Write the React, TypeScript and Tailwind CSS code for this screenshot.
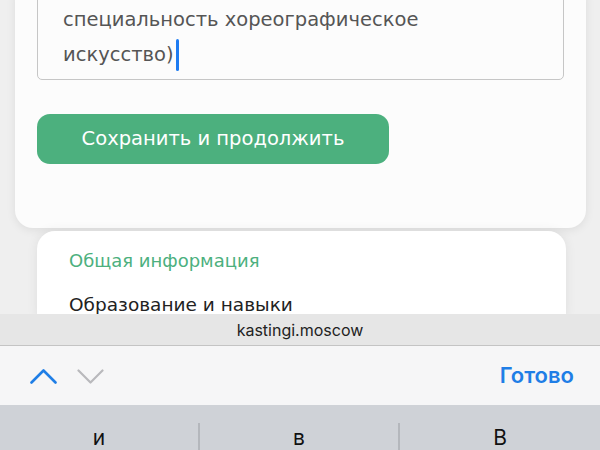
export default function App() {
    return (
        <div className="w-[600px] h-[450px] overflow-hidden bg-[#efefef] flex flex-col font-['DejaVu_Sans',sans-serif]">
            <div className="h-[314px] shrink-0 overflow-hidden flex flex-col">
                <div className="-mt-[9px] ml-[15px] w-[571px] bg-[#fcfcfc] rounded-b-[18px] shadow-[0_2px_10px_rgba(0,0,0,0.08)] pb-[64px]">
                    <div className="ml-[22px] w-[527px] border border-[#c6c6c6] rounded-[5px] pt-[10px] pb-[7px] pl-[25px] text-[19.5px] leading-[35px] text-[#555]">
                        <div>специальность хореографическое</div>
                        <div className="flex items-center">
                            искусство)
                            <span className="inline-block ml-[2px] w-[3px] h-[32px] bg-[#1d7cf2] rounded-sm" />
                        </div>
                    </div>
                    <button className="mt-[34px] ml-[22px] w-[352px] h-[50px] rounded-[13px] bg-[#4cb07e] text-white text-[19.5px] text-center">
                        Сохранить и продолжить
                    </button>
                </div>
                <div className="mt-[3px] ml-[37px] w-[529px] bg-white rounded-t-[18px] shadow-[0_0_12px_rgba(0,0,0,0.07)] pt-[17px] pl-[32px] flex-1">
                    <div className="text-[18px] leading-[26px] text-[#4cb07e]">Общая информация</div>
                    <div className="mt-[18px] text-[18.5px] leading-[26px] text-[#222]">Образование и навыки</div>
                </div>
            </div>
            <div className="h-[32px] shrink-0 bg-[#e6e6e6] border-b border-[#c4c4c4] flex items-center justify-center text-[16px] text-[#222] font-['Inter',sans-serif]">
                kastingi.moscow
            </div>
            <div className="h-[59px] shrink-0 bg-[#f6f6f7] flex items-center px-[30px] font-['Inter',sans-serif]">
                <svg width="27" height="16" viewBox="0 0 27 16" fill="none">
                    <path d="M1.5 14.5 L13.5 2.5 L25.5 14.5" stroke="#1f7ee6" strokeWidth="2.6" strokeLinecap="round" strokeLinejoin="round" />
                </svg>
                <svg width="27" height="16" viewBox="0 0 27 16" fill="none" className="ml-[20px]">
                    <path d="M1.5 2.5 L13.5 14.5 L25.5 2.5" stroke="#b9b9bc" strokeWidth="2.2" strokeLinecap="round" strokeLinejoin="round" />
                </svg>
                <div className="ml-auto -mr-[4px] text-[22px] font-semibold text-[#1f7ee6]">Готово</div>
            </div>
            <div className="h-[45px] shrink-0 overflow-hidden bg-[#cfd2d7] grid grid-cols-3 pt-[18px] font-['Inter',sans-serif] text-[21px] leading-[22px] text-[#111]">
                <div className="border-r-2 border-[#b4b7bc] flex justify-center pt-[4px]">и</div>
                <div className="border-r-2 border-[#b4b7bc] flex justify-center pt-[4px]">в</div>
                <div className="flex justify-center pt-[4px]">В</div>
            </div>
        </div>
    );
}
